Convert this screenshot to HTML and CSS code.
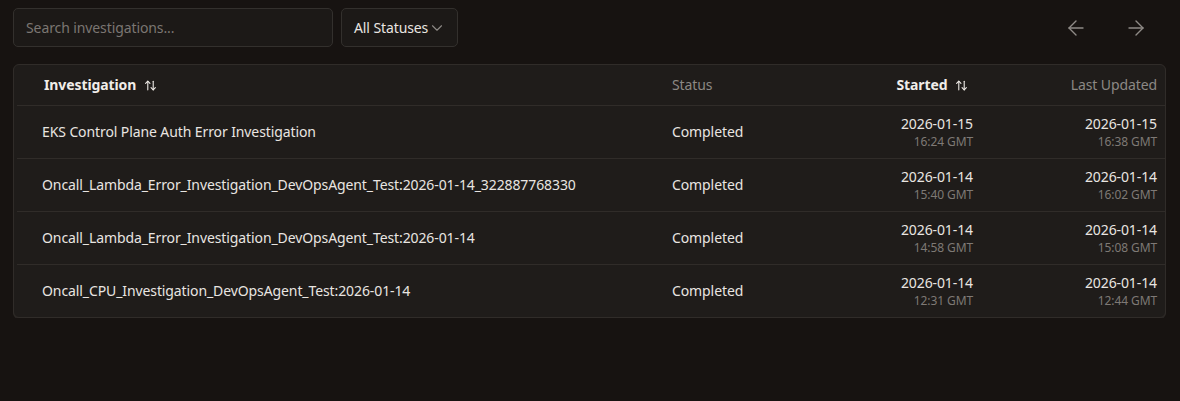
FILE: index.html
```html
<!DOCTYPE html>
<html lang="en">
<head>
  <meta charset="UTF-8">
  <meta name="viewport" content="width=device-width, initial-scale=1.0">
  <title>Investigations</title>
  <link rel="stylesheet" href="styles.css">
</head>
<body>
  <div class="page">
    <!-- Filters and paging -->
    <div class="toolbar">
      <input class="search" type="text" placeholder="Search investigations...">
      <button class="status-filter">
        All Statuses
        <svg class="chevron" width="18" height="18" viewBox="0 0 24 24" fill="none" stroke="currentColor" stroke-width="1.5" stroke-linecap="round" stroke-linejoin="round"><path d="m6 9 6 6 6-6"/></svg>
      </button>
      <div class="pager">
        <button class="pager-btn" aria-label="Previous page">
          <svg width="24" height="24" viewBox="0 0 24 24" fill="none" stroke="currentColor" stroke-width="1.4" stroke-linecap="round" stroke-linejoin="round"><path d="m12 19-7-7 7-7"/><path d="M19 12H5"/></svg>
        </button>
        <button class="pager-btn" aria-label="Next page">
          <svg width="24" height="24" viewBox="0 0 24 24" fill="none" stroke="currentColor" stroke-width="1.4" stroke-linecap="round" stroke-linejoin="round"><path d="M5 12h14"/><path d="m12 5 7 7-7 7"/></svg>
        </button>
      </div>
    </div>

    <!-- Investigations table -->
    <div class="card">
      <table class="investigations">
        <colgroup>
          <col class="col-name">
          <col class="col-status">
          <col class="col-started">
          <col class="col-updated">
        </colgroup>
        <thead>
          <tr>
            <th class="name sortable">Investigation
              <svg class="sort" width="13" height="13" viewBox="0 0 24 24" fill="none" stroke="currentColor" stroke-width="2" stroke-linecap="round" stroke-linejoin="round"><path d="m21 16-4 4-4-4"/><path d="M17 20V4"/><path d="m3 8 4-4 4 4"/><path d="M7 4v16"/></svg>
            </th>
            <th class="status">Status</th>
            <th class="date sortable">Started
              <svg class="sort" width="13" height="13" viewBox="0 0 24 24" fill="none" stroke="currentColor" stroke-width="2" stroke-linecap="round" stroke-linejoin="round"><path d="m21 16-4 4-4-4"/><path d="M17 20V4"/><path d="m3 8 4-4 4 4"/><path d="M7 4v16"/></svg>
            </th>
            <th class="date last">Last Updated</th>
          </tr>
        </thead>
        <tbody>
          <tr>
            <td class="name">EKS Control Plane Auth Error Investigation</td>
            <td class="status">Completed</td>
            <td class="date"><div class="day">2026-01-15</div><div class="time">16:24 GMT</div></td>
            <td class="date last"><div class="day">2026-01-15</div><div class="time">16:38 GMT</div></td>
          </tr>
          <tr>
            <td class="name">Oncall_Lambda_Error_Investigation_DevOpsAgent_Test:2026-01-14_322887768330</td>
            <td class="status">Completed</td>
            <td class="date"><div class="day">2026-01-14</div><div class="time">15:40 GMT</div></td>
            <td class="date last"><div class="day">2026-01-14</div><div class="time">16:02 GMT</div></td>
          </tr>
          <tr>
            <td class="name">Oncall_Lambda_Error_Investigation_DevOpsAgent_Test:2026-01-14</td>
            <td class="status">Completed</td>
            <td class="date"><div class="day">2026-01-14</div><div class="time">14:58 GMT</div></td>
            <td class="date last"><div class="day">2026-01-14</div><div class="time">15:08 GMT</div></td>
          </tr>
          <tr>
            <td class="name">Oncall_CPU_Investigation_DevOpsAgent_Test:2026-01-14</td>
            <td class="status">Completed</td>
            <td class="date"><div class="day">2026-01-14</div><div class="time">12:31 GMT</div></td>
            <td class="date last"><div class="day">2026-01-14</div><div class="time">12:44 GMT</div></td>
          </tr>
        </tbody>
      </table>
    </div>
  </div>
</body>
</html>
```

FILE: styles.css
```css
/* Global */
body {
  margin: 0;
  background: #171311;
  color: #e9e5e1;
  font-family: 'Noto Sans', 'Open Sans', sans-serif;
  font-size: 14px;
  letter-spacing: -0.1px;
}

.page {
  padding: 8px 14px 0 13px;
}

button {
  font-family: inherit;
  letter-spacing: inherit;
  cursor: pointer;
}

/* Toolbar */
.toolbar {
  display: flex;
  align-items: center;
  gap: 8px;
  margin-bottom: 17px;
}

.search {
  box-sizing: border-box;
  width: 320px;
  height: 39px;
  padding: 0 12px;
  background: #1c1917;
  border: 1px solid #33302d;
  border-radius: 5px;
  color: #e9e5e1;
  font-family: inherit;
  font-size: 14px;
  letter-spacing: inherit;
  outline: none;
}

.search::placeholder {
  color: #7b7672;
}

.status-filter {
  box-sizing: border-box;
  display: flex;
  align-items: center;
  gap: 0;
  width: 117px;
  height: 39px;
  padding: 0 6px 0 12px;
  background: #1c1917;
  border: 1px solid #33302d;
  border-radius: 5px;
  color: #e9e5e1;
  font-size: 14px;
  white-space: nowrap;
}

.chevron {
  flex-shrink: 0;
  color: #8d8985;
}

.pager {
  margin-left: auto;
  margin-right: 12px;
  display: flex;
  gap: 24px;
}

.pager-btn {
  width: 36px;
  height: 36px;
  display: flex;
  align-items: center;
  justify-content: center;
  padding: 0;
  background: none;
  border: none;
  color: #8f8b87;
}

/* Table card */
.card {
  background: #1f1c1a;
  border: 1px solid #302c29;
  border-radius: 6px;
  box-shadow: 0 1px 0 #2b2725;
  overflow: hidden;
}

.investigations {
  width: calc(100% - 3px);
  margin-left: 3px;
  border-collapse: collapse;
  table-layout: fixed;
}

.col-name { width: 643px; }
.col-status { width: 140px; }
.col-started { width: 185px; }

th, td {
  padding: 0;
  text-align: left;
  white-space: nowrap;
}

th {
  height: 39px;
  padding-bottom: 1px;
  font-weight: 400;
  color: #8c8884;
  vertical-align: middle;
}

th.sortable {
  font-weight: 700;
  color: #f1ede9;
}

.sort {
  margin-left: 4px;
  vertical-align: -2px;
}

thead tr,
tbody tr {
  border-bottom: 1px solid #302c29;
}

tbody tr:last-child {
  border-bottom: none;
}

td {
  height: 36px;
  padding: 8px 0;
  vertical-align: middle;
}

td.name,
td.status {
  padding-top: 7px;
  padding-bottom: 9px;
}

th.name { padding-left: 27px; }
td.name { padding-left: 25px; }

.status { padding-left: 12px; }

.date {
  text-align: right;
  padding-right: 12px;
}

th.date { padding-right: 17px; }

.date.last,
th.date.last { padding-right: 8px; }

.day {
  line-height: 20px;
}

.time {
  line-height: 16px;
  font-size: 12px;
  color: #7e7975;
}
```
